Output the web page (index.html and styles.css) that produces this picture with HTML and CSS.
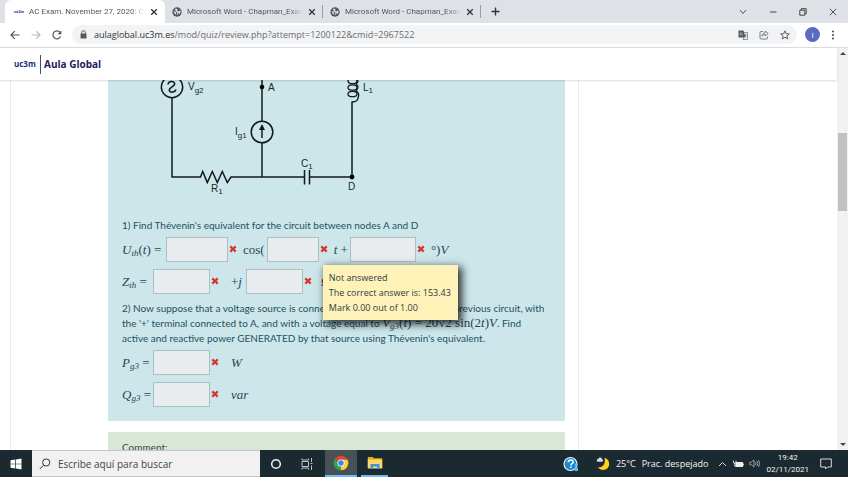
FILE: index.html
```html
<!DOCTYPE html>
<html lang="es">
<head>
<meta charset="utf-8">
<title>AC Exam. November 27, 2020</title>
<link rel="stylesheet" href="styles.css">
</head>
<body>
<svg class="defs" aria-hidden="true">
  <symbol id="globe" viewBox="0 0 16 16"><circle cx="8" cy="8" r="7.5" fill="#50565b"/><path d="M2 6l4 2 1 3-2 1zM6 2l3 2-1 2 3 1 2-2 1 2-2 4-2-1-1 3-1-1 1-3-3-2-1-3z" fill="#dee1e6"/></symbol>
  <symbol id="close" viewBox="0 0 8 8"><path d="M1.2 1.2l5.6 5.6M6.8 1.2L1.2 6.8" stroke="#303438" stroke-width="1.3" fill="none"/></symbol>
  <symbol id="wrong" viewBox="0 0 9 9"><path d="M2.4.6L4.5 2.7 6.6.6 8.4 2.4 6.3 4.5 8.4 6.6 6.6 8.4 4.5 6.3 2.4 8.4.6 6.6 2.7 4.5.6 2.4z" fill="#d8322f"/></symbol>
</svg>

<header class="tabs">
  <div class="tab active"><span class="fav">uc3m</span><span class="title">AC Exam. November 27, 2020: On</span><button aria-label="Cerrar"><svg><use href="#close"/></svg></button></div>
  <div class="tab"><svg class="globe"><use href="#globe"/></svg><span class="title">Microsoft Word - Chapman_Exam</span><button aria-label="Cerrar"><svg><use href="#close"/></svg></button></div>
  <div class="tab"><svg class="globe"><use href="#globe"/></svg><span class="title">Microsoft Word - Chapman_Exam</span><button aria-label="Cerrar"><svg><use href="#close"/></svg></button></div>
  <button class="new" aria-label="Nueva pestaña"><svg width="9" height="9" viewBox="0 0 9 9"><path d="M4.500.5v8M.5 4.500h8" stroke="#303438" stroke-width="1.400"/></svg></button>
  <div class="window">
    <button aria-label="Buscar pestañas"><svg width="8" height="8" viewBox="0 0 8 8"><path d="M1 2l3 3.500L7 2" fill="none" stroke="#555"/></svg></button>
    <button aria-label="Minimizar"><svg width="8" height="8" viewBox="0 0 8 8"><path d="M1 4h6.500" stroke="#444"/></svg></button>
    <button aria-label="Restaurar"><svg width="8" height="8" viewBox="0 0 8 8"><path d="M.8 2.200h5v5h-5zM2.200 2V.7h5v5H6" fill="none" stroke="#444"/></svg></button>
    <button aria-label="Cerrar ventana"><svg width="8" height="8" viewBox="0 0 8 8"><path d="M.8.8l6.400 6.400M7.200.8L.8 7.200" stroke="#444" stroke-width=".9"/></svg></button>
  </div>
</header>

<nav class="toolbar">
  <button aria-label="Atrás"><svg width="10" height="10" viewBox="0 0 10 10"><path d="M9.500 5H1.200M4.800 1.200L1 5l3.800 3.800" fill="none" stroke="#50555a" stroke-width="1.200"/></svg></button>
  <button aria-label="Adelante"><svg width="10" height="10" viewBox="0 0 10 10"><path d="M.5 5h8.300M5.200 1.200L9 5 5.200 8.800" fill="none" stroke="#b9bcbf" stroke-width="1.200"/></svg></button>
  <button aria-label="Recargar"><svg width="10" height="10" viewBox="0 0 10 10"><path d="M8.600 6.500A4 4 0 1 1 8 2.200" fill="none" stroke="#50555a" stroke-width="1.200"/><path d="M9.400.4v3.900H5.500z" fill="#50555a"/></svg></button>
  <div class="omnibox">
    <svg width="7" height="9" viewBox="0 0 7 9"><path d="M1.700 4V2.500a1.800 1.800 0 0 1 3.600 0V4" fill="none" stroke="#54595e"/><rect x=".5" y="3.500" width="6" height="5" rx=".6" fill="#54595e"/></svg>
    <span class="url"><b>aulaglobal.uc3m.es</b>/mod/quiz/review.php?attempt=1200122&amp;cmid=2967522</span>
    <button aria-label="Traducir"><svg width="10" height="10" viewBox="0 0 10 10"><path d="M.5.5h5l2 7h-7z" fill="#50565b"/><path d="M6 2.500h3.500v7H5L6 7.500" fill="none" stroke="#777c80" stroke-width=".8"/><path d="M4.500 3H2.200v2h2.200V4" fill="none" stroke="#c8cbce" stroke-width=".7"/><path d="M6.500 4.500h2.500M7.800 4v1L6.500 7M7 5l1.500 2" fill="none" stroke="#666" stroke-width=".5"/></svg></button>
    <button aria-label="Compartir"><svg width="10" height="10" viewBox="0 0 10 10"><path d="M4 1.500H2a1 1 0 0 0-1 1V8a1 1 0 0 0 1 1h5.500a1 1 0 0 0 1-1V6.500M6.200 1l3 2.500-3 2.500V4.500C4.800 4.500 3.700 5 3 6.300c.1-2 1.200-3.300 3.200-3.600z" fill="none" stroke="#5f6368" stroke-width=".8"/></svg></button>
    <button aria-label="Favoritos"><svg width="10" height="10" viewBox="0 0 10 10"><path d="M5 .8l1.200 2.900 3.100.2-2.400 2 .8 3L5 7.300 2.300 8.900l.8-3-2.400-2 3.100-.2z" fill="none" stroke="#4a4f54" stroke-width=".9"/></svg></button>
  </div>
  <button class="avatar" aria-label="Perfil">I</button>
  <button class="more" aria-label="Menú"><svg width="4" height="10" viewBox="0 0 4 10" fill="#444"><circle cx="2" cy="1.500" r="1"/><circle cx="2" cy="5" r="1"/><circle cx="2" cy="8.500" r="1"/></svg></button>
</nav>

<div class="viewport">
  <div class="page">
    <div class="brand"><span class="logo">uc3m</span><a href="#">Aula Global</a></div>
    <main>
      <section class="card">
        <article class="question">
          <svg class="circuit" width="300" height="125" viewBox="122 80 300 125">
            <g fill="none" stroke="#111b1e" stroke-width="1.500">
              <circle cx="172" cy="87" r="10.700"/>
              <path d="M168 84.500c.3-3.300 5-4 6.500-1.500 1.800 3.200-6.500 4.500-5.200 7.700 1.200 2.400 6 1.600 6.700-1.200"/>
              <path d="M172 98v79h28.500l2.200-5.500 4.600 11 5-11 5 11 5-11 5 11 3.700-5.500H304.500M309.500 177H352V101.500"/>
              <path d="M304.500 170v14.500M309.500 170v14.500M262 80v41M262 143v34"/>
              <circle cx="262" cy="132" r="10.800"/><path d="M262 138v-10"/>
              <path d="M352 102c4 0 6-1.500 6-4.500" stroke-width="1.300"/>
              <g stroke-width="1.300"><ellipse cx="352.500" cy="81" rx="4.500" ry="2.700"/><ellipse cx="352.500" cy="87.500" rx="4.500" ry="2.700"/><ellipse cx="352.500" cy="94" rx="4.500" ry="2.700"/><path d="M356 79q4 2 0 5 4 2 0 7 4 2 2 7"/></g>
            </g>
            <path d="M259 130l3-6 3 6z" fill="#111b1e"/><circle cx="262" cy="87" r="2.300"/><circle cx="352" cy="177" r="2.400"/>
            <g class="names">
              <text x="188" y="90">V<tspan dy="3">g2</tspan></text><text x="268" y="91">A</text><text x="363" y="91">L<tspan dy="2">1</tspan></text>
              <text x="235" y="135">I<tspan dy="3">g1</tspan></text><text x="211" y="192">R<tspan dy="2">1</tspan></text><text x="301" y="167">C<tspan dy="2">1</tspan></text><text x="348" y="190">D</text>
            </g>
          </svg>
          <p>1) Find Thévenin's equivalent for the circuit between nodes A and D</p>
          <div class="row">
            <label class="math wide" for="u"><i>U<sub>th</sub></i>(<i>t</i>) =</label><input id="u" class="m" readonly><svg class="wrong"><use href="#wrong"/></svg>
            <label class="math unit" for="w">cos(</label><input id="w" class="s" readonly><svg class="wrong"><use href="#wrong"/></svg>
            <label class="math unit" for="ph"><i>t</i> +</label><input id="ph" class="l" readonly>
            <span class="feedback"><svg class="wrong"><use href="#wrong"/></svg><span class="tip" role="tooltip">Not answered<br>The correct answer is: 153.43<br>Mark 0.00 out of 1.00</span></span>
            <span class="math unit">°)<i>V</i></span>
          </div>
          <div class="row">
            <label class="math lhs" for="zr"><i>Z<sub>th</sub></i> =</label><input id="zr" readonly><svg class="wrong"><use href="#wrong"/></svg>
            <label class="math far" for="zi">+<i>j</i></label><input id="zi" readonly><svg class="wrong"><use href="#wrong"/></svg><span class="math ohm">Ω</span>
          </div>
          <p class="second">2) Now suppose that a voltage source is connected to nodes A and D of the previous circuit, with<br>the '+' terminal connected to A, and with a voltage equal to <span class="math"><i>V<sub>g3</sub></i>(<i>t</i>) = 20√<span class="root">2</span> sin(2<i>t</i>)<i>V</i></span>. Find<br>active and reactive power GENERATED by that source using Thévenin's equivalent.</p>
          <div class="row"><label class="math lhs" for="p"><i>P<sub>g3</sub></i> =</label><input id="p" readonly><svg class="wrong"><use href="#wrong"/></svg><span class="math far"><i>W</i></span></div>
          <div class="row"><label class="math lhs" for="q"><i>Q<sub>g3</sub></i> =</label><input id="q" readonly><svg class="wrong"><use href="#wrong"/></svg><span class="math far"><i>var</i></span></div>
        </article>
        <div class="comment">Comment:</div>
      </section>
    </main>
  </div>
  <div class="scroll"><span class="up"></span><span class="thumb"></span><span class="down"></span></div>
</div>

<footer class="taskbar">
  <button class="start" aria-label="Inicio"><svg width="12" height="12" viewBox="0 0 12 12"><path d="M.5 2.200L5.300 1.500V5.700H.5zM6 1.400L11.500.6v5.100H6zM.5 6.300h4.800v4.200L.5 9.800zM6 6.300h5.500v5.100L6 10.600z" fill="#fff"/></svg></button>
  <label class="search"><svg width="12" height="12" viewBox="0 0 12 12"><circle cx="7.200" cy="4.500" r="3.600" fill="none" stroke="#333"/><path d="M4.500 7.200L.8 11" stroke="#333"/></svg><input placeholder="Escribe aquí para buscar" aria-label="Buscar"></label>
  <button aria-label="Cortana"><svg width="12" height="12" viewBox="0 0 12 12"><circle cx="6" cy="6" r="4.300" fill="none" stroke="#f4f4f4" stroke-width="1.500"/></svg></button>
  <button aria-label="Vista de tareas"><svg width="12" height="12" viewBox="0 0 12 12" fill="none" stroke="#bcc2c5"><path d="M1 3.500h6.500v5H1zM1 .5v1.500h6.500V.5M1 11.500V10h6.500v1.500M10.500 0v4M10.500 7.500V12M9.500 5.500h2"/></svg></button>
  <button class="open current" aria-label="Chrome"><svg width="16" height="16" viewBox="0 0 16 16"><path d="M8 8L1.700 4.300A7.200 7.200 0 0 1 14.400 4.600z" fill="#df4438"/><path d="M8 8l6.400-3.400A7.200 7.200 0 0 1 7.500 15.200z" fill="#fbcf3e"/><path d="M8 8l-.5 7.200A7.200 7.200 0 0 1 1.700 4.300z" fill="#32a350"/><path d="M8 4.600h6.400l-3.200 5z" fill="#fbcf3e"/><path d="M8 4.600h6.400L12 3H7z" fill="#df4438"/><circle cx="8" cy="8" r="3.500" fill="#fff"/><circle cx="8" cy="8" r="2.700" fill="#3c82e8"/></svg></button>
  <button class="open folder" aria-label="Explorador"><svg width="16" height="14" viewBox="0 0 16 14"><path d="M.8 1h5l1 1.200h8.400V12H.8z" fill="#e8a915"/><path d="M.8 3.500h14.400V12.500H.8z" fill="#ffd766"/><path d="M3.500 13V8h9v5h-2.500v-2.500H6V13z" fill="#3f93df"/></svg></button>
  <div class="tray">
    <svg width="16" height="16" viewBox="0 0 16 16"><circle cx="7.500" cy="8" r="6.500" fill="#1789cf" stroke="#e7f4fb" stroke-width="1.200"/><path d="M5.200 6.300c0-3 5-3 5-.3 0 1.700-2.300 1.700-2.300 3.400M7.900 10.500v1.500" fill="none" stroke="#fff" stroke-width="1.500"/><circle cx="13.200" cy="9" r="1.500" fill="#55bdf0"/><path d="M11.500 15v-3q1.800-2 3.500 0v3z" fill="#55bdf0"/></svg>
    <svg class="moon" width="14" height="14" viewBox="0 0 14 14"><path d="M8.500.8C12 2 13.500 4.500 13.100 8 12.400 13.200 5 14.900 2 10.200 7 11 10 6 8.500.8z" fill="#ffd022"/><path d="M1.500 4.700C.1 3.600 1 2 2.300 2.100 3-.2 5.800.4 5.900 2.300c1.800.2 1.600 2.400.1 2.400z" fill="#cbe0f2"/></svg>
    <span class="temp">25°C</span><span class="weather">Prac. despejado</span>
    <svg class="caret" width="9" height="8" viewBox="0 0 9 8"><path d="M1 6l3.500-3.500L8 6" fill="none" stroke="#d7dbdd"/></svg>
    <svg class="battery" width="11" height="8" viewBox="0 0 11 8"><path d="M2.500 2H10v5H2.500z" fill="#eee"/><path d="M.5.500v2.500h2.500V.5M1.700 3v3h2M10.500 3.500v2" fill="none" stroke="#eee" stroke-width=".8"/></svg>
    <svg class="sound" width="11" height="9" viewBox="0 0 11 9"><path d="M.8 3.200h1.700L5 .9v7.200L2.500 5.800H.8zM6.500 3q1 1.500 0 3M8 2q1.800 2.500 0 5M9.500 1q2.500 3.500 0 7" fill="none" stroke="#c8cdd0" stroke-width=".7"/></svg>
    <time>19:42<br>02/11/2021</time>
    <svg class="note" width="12" height="12" viewBox="0 0 12 12"><path d="M.7 1h10.600v8H7.500L5.500 11V9H.7z" fill="none" stroke="#d7dbdd"/></svg>
  </div>
</footer>
</body>
</html>
```
FILE: styles.css
```css
* { box-sizing: border-box; }
body { margin: 0; height: 100vh; display: flex; flex-direction: column; overflow: hidden; background: #fff; font-family: "Open Sans", "Noto Sans", sans-serif; font-size: 9px; color: #1d5160; }
button { border: 0; padding: 0; background: none; font: inherit; display: flex; align-items: center; justify-content: center; }
svg { display: block; flex: none; }
.defs { width: 0; height: 0; position: absolute; }

.tabs { height: 23px; flex: none; display: flex; align-items: center; background: #dee1e6; padding-left: 5px; color: #54585c; font: 8px Roboto, sans-serif; }
.tab { width: 158px; height: 23px; display: flex; align-items: center; gap: 5px; padding: 0 6px 0 9px; border-right: 1px solid transparent; }
.tab.active { width: 160px; background: #fff; border-radius: 6px 6px 0 0; }
.tab:not(.active) { height: 13px; padding-left: 7px; border-right-color: #9a9ea3; }
.tab .title { flex: 1; min-width: 0; white-space: nowrap; overflow: hidden; mask-image: linear-gradient(to right, #000 88%, transparent); }
.tab button, .tab button svg { width: 8px; height: 8px; }
.fav { width: 10px; font-size: 4px; font-weight: 700; color: #26358c; }
.globe { width: 10px; height: 10px; }
.new { width: 20px; height: 20px; margin-left: 4px; }
.window { margin-left: auto; display: flex; height: 19px; }
.window button { width: 30px; }

.toolbar { height: 25px; flex: none; display: flex; align-items: center; padding: 0 10px 1px 4px; background: #fff; border-bottom: 1px solid #dcdde0; }
.toolbar > button { width: 21px; height: 20px; }
.omnibox { flex: 1; height: 19px; margin-left: 5px; border-radius: 10px; background: #f1f3f4; display: flex; align-items: center; padding: 0 7px 0 8px; gap: 11px; }
.omnibox > svg { margin-right: -4px; }
.url { flex: 1; color: #6a6e72; white-space: nowrap; }
.url b { font-weight: 400; color: #303438; }
.toolbar > .avatar { width: 15px; height: 15px; margin-left: 8px; border-radius: 50%; background: #5c6bc0; color: #fff; font-size: 8px; }
.toolbar > .more { width: 10px; margin-left: 8px; }

.viewport { flex: 1; min-height: 0; display: flex; }
.page { flex: 1; min-width: 0; display: flex; flex-direction: column; }
.brand { height: 32px; flex: none; display: flex; align-items: center; padding-left: 14px; box-shadow: 0 1px 2px #0002; position: relative; color: #1c2260; }
.logo { width: 27px; height: 19px; border-right: 1px solid #3f4a8c; font-size: 8px; line-height: 18px; font-weight: 700; color: #232e85; }
.brand a { margin-left: 3px; font-size: 10px; font-weight: 700; color: #20225e; text-decoration: none; }
main { flex: 1; min-height: 0; overflow: hidden; display: grid; grid-template-columns: minmax(0, 1fr) 258px; padding-left: 10px; }
.card { border: solid #e9ebed; border-width: 0 1px; padding: 0 13px 0 97px; }
.question, .comment { font-family: Lato, sans-serif; font-size: 10px; line-height: 15px; white-space: nowrap; }
.question { background: #cde6ea; padding: 0 14px 11px; }
.circuit { margin-bottom: 13px; }
.names { font: 10px "Liberation Sans", Arial, sans-serif; fill: #17282c; }
.names tspan { font-size: 8px; }
p { margin: 0; }
.second { margin: 4px 0 0; }
.row { height: 32px; display: flex; align-items: center; }
.math { font-family: "Liberation Serif", "Times New Roman", serif; font-size: 13px; line-height: 1px; color: #1d4655; }
.row .math { line-height: 15px; }
.math sub { font-size: 9px; line-height: 1px; vertical-align: -2px; }
.root { border-top: 1px solid #1d4655; }
.wide { width: 44px; }
.lhs { width: 31px; }
.unit { margin: 0 2px 0 6px; }
.far { min-width: 14px; margin: 0 1px 0 12px; }
.ohm { margin-left: 9px; }
.row input { width: 57px; height: 25px; padding: 0; border: 1px solid #aebcc4; background: #e9ecef; }
.row .s { width: 52px; }
.row .m { width: 62px; }
.row .l { width: 66px; }
.wrong { width: 8px; height: 8px; margin-left: 1px; }
.feedback { position: relative; }
.tip { position: absolute; z-index: 2; right: -33px; top: 20px; padding: 5px 7px 5px 6px; font: 9px/15px "Open Sans", sans-serif; background: #fff2b8; color: #2b3d45; box-shadow: 3px 3px 8px 1px #000c; }
.comment { margin-top: 11px; padding: 8px 14px; height: 30px; background: #d8e7d8; color: #354a40; }
.scroll { width: 11px; background: #f1f1f1; display: flex; flex-direction: column; align-items: center; padding: 4px 0; }
.up, .down { border: 3px solid transparent; border-top-width: 0; border-bottom-color: #444; }
.down { margin-top: auto; border-width: 3px 3px 0; border-top-color: #444; }
.thumb { width: 9px; height: 78px; margin-top: 78px; background: #c1c1c1; }

.taskbar { height: 27px; flex: none; display: flex; background: #1b2a30; color: #f2f4f5; }
.taskbar > button { width: 31px; }
.taskbar > .start { width: 32px; }
.search { width: 228px; display: flex; align-items: center; gap: 7px; padding-left: 7px; background: #f1f1f1; border: solid #c4c6c7; border-width: 1px 0; }
.search input { flex: 1; min-width: 0; border: 0; padding: 0; background: none; outline: 0; font: 10px "Open Sans", sans-serif; }
.search input::placeholder { color: #444; opacity: 1; }
.taskbar > .open { border-bottom: 2px solid #76b9ed; }
.taskbar > .current { margin-left: 3px; background: #475256; width: 32px; }
.taskbar > .folder { margin-left: 4px; width: 27px; }
.tray { margin-left: auto; display: flex; align-items: center; padding-right: 16px; white-space: nowrap; font-size: 9px; }
.moon { margin: 0 6px 0 17px; }
.temp { margin-right: 6px; }
.caret { margin: 0 6px 0 10px; }
.sound { margin: 0 6px 0 5px; }
time { text-align: center; font: 8px/12px Roboto, sans-serif; margin-right: 11px; }
```
